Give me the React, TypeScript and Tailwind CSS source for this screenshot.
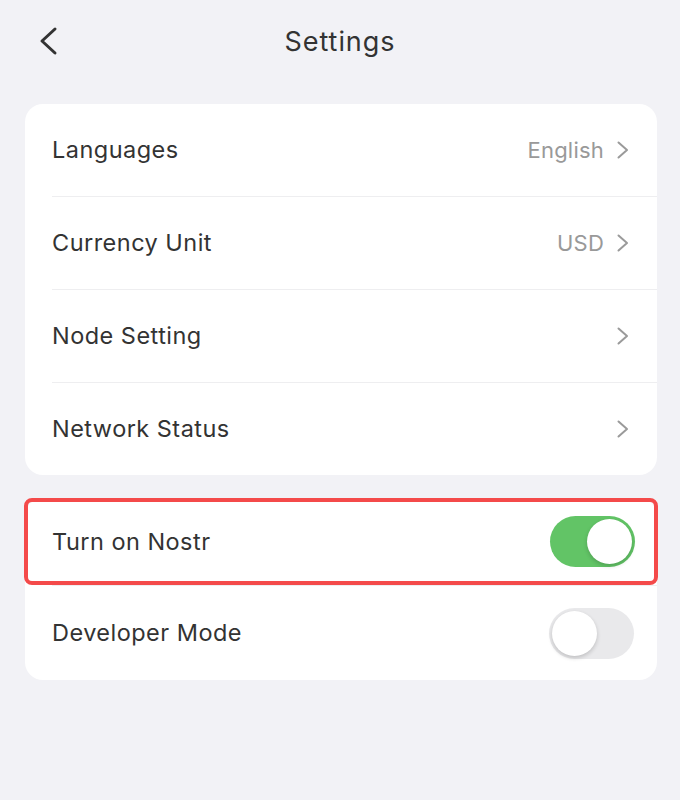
type Row = { label: string; value?: string };

const NAV_ROWS: Row[] = [
  { label: "Languages", value: "English" },
  { label: "Currency Unit", value: "USD" },
  { label: "Node Setting" },
  { label: "Network Status" },
];

function Chevron() {
  return (
    <svg width="14" height="20" viewBox="0 0 14 20" fill="none" className="text-[#9a9a9a]">
      <polyline points="2.5,2.5 11,10 2.5,17.5" stroke="currentColor" strokeWidth="2" strokeLinecap="round" strokeLinejoin="round" />
    </svg>
  );
}

function Toggle({ on }: { on: boolean }) {
  return (
    <div
      className={
        on
          ? "flex h-[51px] w-[85px] items-center justify-end rounded-full bg-[#62c466] p-[3px]"
          : "flex h-[51px] w-[85px] items-center justify-start rounded-full bg-[#e9e9eb] p-[3px]"
      }
    >
      <div className="h-[45px] w-[45px] rounded-full bg-white shadow-[0_2px_4px_rgba(0,0,0,0.18)]" />
    </div>
  );
}

export default function App() {
  return (
    <div className="min-h-[800px] w-full bg-[#f2f2f6] font-['Inter',sans-serif] text-[#333]">
      <header className="relative flex h-[83px] items-center justify-center">
        <svg width="22" height="30" viewBox="0 0 22 30" fill="none" className="absolute left-[38px] top-[26px] text-[#333]">
          <polyline points="17,3 4,15 17,27" stroke="currentColor" strokeWidth="3" strokeLinecap="round" strokeLinejoin="round" />
        </svg>
        <h1 className="text-[27px] leading-none tracking-[0.035em]">Settings</h1>
      </header>

      <div className="ml-[25px] mr-[23px] mt-[21px] rounded-[18px] bg-white">
        {NAV_ROWS.map((row, i) => (
          <div key={row.label} className="ml-[27px]">
            <div
              className={
                i < NAV_ROWS.length - 1
                  ? "flex h-[93px] items-center justify-between border-b border-[#eeeef0] pr-[27px]"
                  : "flex h-[92px] items-center justify-between pr-[27px]"
              }
            >
              <span className="text-[23.5px] tracking-[0.02em]">{row.label}</span>
              <div className="flex items-center gap-[12px]">
                {row.value && <span className="text-[22px] tracking-[0.01em] text-[#999]">{row.value}</span>}
                <Chevron />
              </div>
            </div>
          </div>
        ))}
      </div>

      <div className="ml-[25px] mr-[23px] mt-[23px] rounded-[18px] bg-white">
        <div className="-mx-px rounded-[8px] border-[4px] border-[#f44a4a]">
          <div className="flex h-[79px] items-center justify-between pl-[24px] pr-[19px]">
            <span className="text-[23.5px] tracking-[0.02em]">Turn on Nostr</span>
            <Toggle on />
          </div>
        </div>
        <div className="ml-[27px]">
          <div className="flex h-[95px] items-center justify-between border-t border-[#eeeef0] pr-[23px]">
            <span className="text-[23.5px] tracking-[0.02em]">Developer Mode</span>
            <Toggle on={false} />
          </div>
        </div>
      </div>
    </div>
  );
}
